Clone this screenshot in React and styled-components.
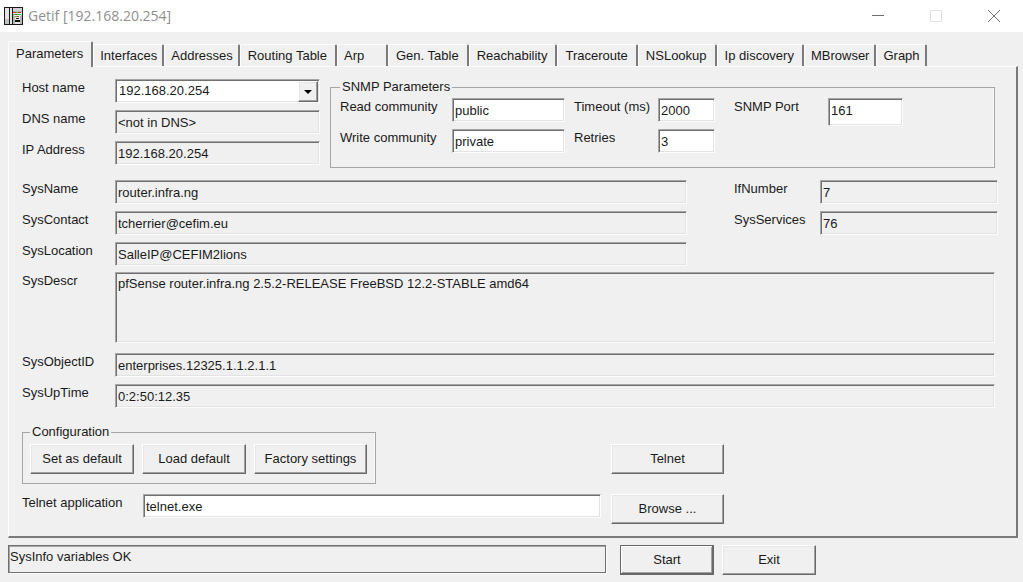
import React from 'react';
import styled, { createGlobalStyle, css } from 'styled-components';

const GlobalStyle = createGlobalStyle`
  * { box-sizing: border-box; }
  body {
    margin: 0;
    background: #f0f0f0;
    color: #1a1a1a;
    font: 13px/16px "Liberation Sans", Arial, sans-serif;
  }
  button, input, select, textarea { font: inherit; color: inherit; margin: 0; }
`;

const sunken = css`
  border: 1px solid;
  border-color: #a6a6a6 #fcfcfc #fcfcfc #a6a6a6;
  border-radius: 0;
  box-shadow: inset 2px 2px 0 -1px #707070, inset 1px 1px 0 #707070, inset -1px -1px 0 #e3e3e3;
`;

const raised = css`
  border: 1px solid;
  border-color: #fff #696969 #696969 #fff;
  border-radius: 0;
  box-shadow: inset -1px -1px 0 #a0a0a0, inset 1px 1px 0 #e6e6e6;
`;

const TitleBar = styled.header`
  display: flex;
  align-items: center;
  height: 32px;
  padding-left: 4px;
  background: #fff;
`;

const Title = styled.h1`
  flex: 1;
  margin: 0 0 0 5px;
  font: 14px/20px "Open Sans", "Noto Sans", sans-serif;
  color: #8f8f8f;
`;

const CaptionButton = styled.button`
  display: grid;
  place-items: center;
  width: 58px;
  height: 32px;
  padding: 0;
  border: 0;
  background: none;
  color: ${(p) => (p.disabled ? '#e2e2e2' : '#6f6f6f')};
`;

const Body = styled.main`
  padding: 9px 5px 8px 8px;
`;

const TabStrip = styled.div`
  display: flex;
  align-items: flex-end;
  height: 25px;
`;

const Tab = styled.button`
  flex: none;
  height: 22px;
  min-width: 51px;
  padding: ${(p) => (p.$roomy ? '1px 8px 0 7px' : '1px 5px 0 6px')};
  border: solid;
  border-width: 1px 2px 0 1px;
  border-color: #fcfcfc #7a7a7a #f0f0f0 #fcfcfc;
  border-radius: 2px 2px 0 0;
  background: #f0f0f0;
  text-align: left;
  white-space: nowrap;

  &[aria-selected='true'] {
    z-index: 1;
    height: 26px;
    margin-bottom: -1px;
    padding: 0 8px 2px 7px;
  }
`;

const Panel = styled.section`
  display: flex;
  flex-direction: column;
  padding: 12px 18px 12px 13px;
  border: solid;
  border-width: 1px 2px 2px 1px;
  border-color: #fcfcfc #7a7a7a #7a7a7a #fcfcfc;
`;

const TopArea = styled.div`
  display: grid;
  grid-template-columns: 298px minmax(0, 1fr);
  gap: 10px;
  margin: 0 3px 12px 0;
`;

const SystemArea = styled.div`
  display: grid;
  grid-template-columns: minmax(0, 1fr) 264px;
  gap: 47px;
  margin-bottom: 6px;
`;

const DetailArea = styled.div`
  display: grid;
  gap: 10px;
  margin: 0 3px 16px 0;
`;

const FieldList = styled.div`
  display: grid;
  grid-template-columns: ${(p) => p.$label || 93}px minmax(0, 1fr);
  align-content: start;
  align-items: start;
  row-gap: 7px;
`;

const Label = styled.label`
  padding-top: 1px;
  white-space: nowrap;
`;

const Field = styled.input`
  ${sunken}
  display: block;
  width: 100%;
  height: ${(p) => (p.$tall ? 28 : 24)}px;
  padding: 0 2px ${(p) => (p.$tall ? 4 : 0)}px;
  background: ${(p) => (p.readOnly ? '#f0f0f0' : '#fff')};
  outline: 0;
`;

const Description = styled.textarea`
  ${sunken}
  display: block;
  width: 100%;
  height: 71px;
  padding: 3px 2px;
  background: #f0f0f0;
  resize: none;
  outline: 0;
`;

const Combo = styled.div`
  display: grid;
  grid-template-columns: minmax(0, 1fr) 22px;
  height: 24px;
`;

const ComboSelect = styled.select`
  ${sunken}
  grid-area: 1 / 1 / 2 / 3;
  appearance: none;
  width: 100%;
  height: 24px;
  padding: 0 24px 0 3px;
  background: #fff;
  outline: 0;
`;

const ComboArrow = styled.span`
  ${raised}
  grid-area: 1 / 2;
  display: grid;
  place-items: center;
  margin: 2px 2px 1px 0;
  background: #f0f0f0;
  pointer-events: none;
`;

const Group = styled.fieldset`
  min-width: 0;
  margin: 0;
  padding: ${(p) => p.$padding};
  border: 1px solid #a5a5a5;
  box-shadow: inset -1px 0 0 #fafafa;
`;

const Legend = styled.legend`
  padding: 0 2px;
`;

const SnmpGrid = styled.div`
  display: grid;
  grid-template-columns: 112px 113px 93px 57px 113px 75px;
  grid-template-rows: 24px 24px;
  align-items: start;
  row-gap: 7px;
`;

const InGroup = styled.div`
  display: contents;
  & > label:nth-of-type(2) { padding-left: 9px; }
  & > label:nth-of-type(3) { padding-left: 19px; }
`;

const PushButton = styled.button`
  ${raised}
  width: ${(p) => p.$width || 113}px;
  height: 30px;
  padding: 0;
  background: #f0f0f0;
  white-space: nowrap;
  ${(p) =>
    p.$isDefault &&
    css`
      border-color: #696969;
      box-shadow: inset -1px -1px 0 #696969, inset 1px 1px 0 #fff, inset -2px -2px 0 #a0a0a0;
    `}
`;

const ButtonRow = styled.div`
  display: flex;
  gap: 8px;
`;

const ActionArea = styled.div`
  display: grid;
  grid-template-columns: minmax(0, 579px) 113px;
  gap: 10px;
  & > button:first-of-type { margin-top: 20px; }
`;

const Footer = styled.footer`
  display: flex;
  gap: 14px;
  margin-top: 7px;
`;

const Status = styled.output`
  flex: 0 1 598px;
  height: 28px;
  padding: 3px 1px;
  border: 1px solid #707070;
  box-shadow: inset 1px 1px 0 #a6a6a6, 1px 1px 0 #fcfcfc;
`;

const tabs = [
  { name: 'Parameters' },
  { name: 'Interfaces' },
  { name: 'Addresses' },
  { name: 'Routing Table', roomy: true },
  { name: 'Arp' },
  { name: 'Gen. Table', roomy: true },
  { name: 'Reachability', roomy: true },
  { name: 'Traceroute', roomy: true },
  { name: 'NSLookup', roomy: true },
  { name: 'Ip discovery', roomy: true },
  { name: 'MBrowser' },
  { name: 'Graph' },
];

function AppIcon() {
  return (
    <svg width="19" height="18" viewBox="0 0 19 18" shapeRendering="crispEdges" aria-hidden="true">
      <rect width="19" height="18" fill="#1a1a1a" />
      <path d="M1 1h4v16H1zM6 1h2v16H6z" fill="#e4e4e4" />
      <path d="M1 12h4v5H1z" fill="#c2c2c2" />
      <rect x="9" y="1" width="9" height="16" fill="#b4b4b4" />
      <path d="M9 1h9v3H9z" fill="#d0d0d0" />
      <path d="M9 5h9v2l-2 3v7h-5v-7L9 7z" fill="#eaeaea" />
      <path d="M9 5h3v1H9zM14 5h3v1h-3zM11 7h2v1h-2z" fill="#e02828" />
      <path d="M12 5h2v1h-2zM9 7h2v1H9zM13 7h4v1h-4zM11 9h2v1h-2z" fill="#18c848" />
      <path d="M13 9h2v1h-2z" fill="#e02828" />
      <path d="M12 11h3v1h-3zM11 13h5v2h-5z" fill="#111" />
    </svg>
  );
}

function TextField({ id, label, value, ...rest }) {
  return (
    <>
      <Label htmlFor={id}>{label}</Label>
      <Field id={id} defaultValue={value} {...rest} />
    </>
  );
}

export default function App() {
  return (
    <>
      <GlobalStyle />
      <TitleBar>
        <AppIcon />
        <Title>Getif [192.168.20.254]</Title>
        <CaptionButton aria-label="Minimize">
          <svg width="12" height="12"><path d="M0 5.5h12" stroke="currentColor" /></svg>
        </CaptionButton>
        <CaptionButton aria-label="Maximize" disabled>
          <svg width="12" height="12"><path d="M.5.5h11v11H.5z" fill="none" stroke="currentColor" /></svg>
        </CaptionButton>
        <CaptionButton aria-label="Close">
          <svg width="12" height="12"><path d="M0 0l12 12M12 0L0 12" stroke="currentColor" /></svg>
        </CaptionButton>
      </TitleBar>
      <Body>
        <TabStrip role="tablist">
          {tabs.map(({ name, roomy }, i) => (
            <Tab key={name} role="tab" aria-selected={i === 0} $roomy={roomy}>{name}</Tab>
          ))}
        </TabStrip>
        <Panel role="tabpanel" aria-label="Parameters">
          <TopArea>
            <FieldList>
              <Label htmlFor="host">Host name</Label>
              <Combo>
                <ComboSelect id="host"><option>192.168.20.254</option></ComboSelect>
                <ComboArrow>
                  <svg width="8" height="4"><path d="M0 0h8L4 4z" fill="#000" /></svg>
                </ComboArrow>
              </Combo>
              <TextField id="dns" label="DNS name" value="<not in DNS>" readOnly />
              <TextField id="ip" label="IP Address" value="192.168.20.254" readOnly />
            </FieldList>
            <Group $padding="3px 8px 14px 9px">
              <Legend>SNMP Parameters</Legend>
              <SnmpGrid>
                <InGroup>
                  <TextField id="read" label="Read community" value="public" />
                  <TextField id="timeout" label="Timeout (ms)" value="2000" />
                  <TextField id="port" label="SNMP Port" value="161" $tall />
                </InGroup>
                <InGroup>
                  <TextField id="write" label="Write community" value="private" />
                  <TextField id="retries" label="Retries" value="3" />
                </InGroup>
              </SnmpGrid>
            </Group>
          </TopArea>
          <SystemArea>
            <FieldList>
              <TextField id="sysname" label="SysName" value="router.infra.ng" readOnly />
              <TextField id="contact" label="SysContact" value="tcherrier@cefim.eu" readOnly />
              <TextField id="location" label="SysLocation" value="SalleIP@CEFIM2lions" readOnly />
            </FieldList>
            <FieldList $label={86}>
              <TextField id="ifnumber" label="IfNumber" value="7" readOnly />
              <TextField id="services" label="SysServices" value="76" readOnly />
            </FieldList>
          </SystemArea>
          <DetailArea>
            <FieldList>
              <Label htmlFor="descr">SysDescr</Label>
              <Description
                id="descr"
                readOnly
                defaultValue="pfSense router.infra.ng 2.5.2-RELEASE FreeBSD 12.2-STABLE amd64"
              />
            </FieldList>
            <FieldList>
              <TextField id="oid" label="SysObjectID" value="enterprises.12325.1.1.2.1.1" readOnly />
              <TextField id="uptime" label="SysUpTime" value="0:2:50:12.35" readOnly />
            </FieldList>
          </DetailArea>
          <ActionArea>
            <ButtonRow>
              <Group $padding="4px 8px 9px 7px">
                <Legend>Configuration</Legend>
                <ButtonRow>
                  <PushButton $width={104}>Set as default</PushButton>
                  <PushButton $width={104}>Load default</PushButton>
                  <PushButton>Factory settings</PushButton>
                </ButtonRow>
              </Group>
            </ButtonRow>
            <PushButton>Telnet</PushButton>
            <FieldList $label={121}>
              <TextField id="telnet" label="Telnet application" value="telnet.exe" />
            </FieldList>
            <PushButton>Browse ...</PushButton>
          </ActionArea>
        </Panel>
        <Footer>
          <Status>SysInfo variables OK</Status>
          <ButtonRow>
            <PushButton $width={94} $isDefault>Start</PushButton>
            <PushButton $width={94}>Exit</PushButton>
          </ButtonRow>
        </Footer>
      </Body>
    </>
  );
}
